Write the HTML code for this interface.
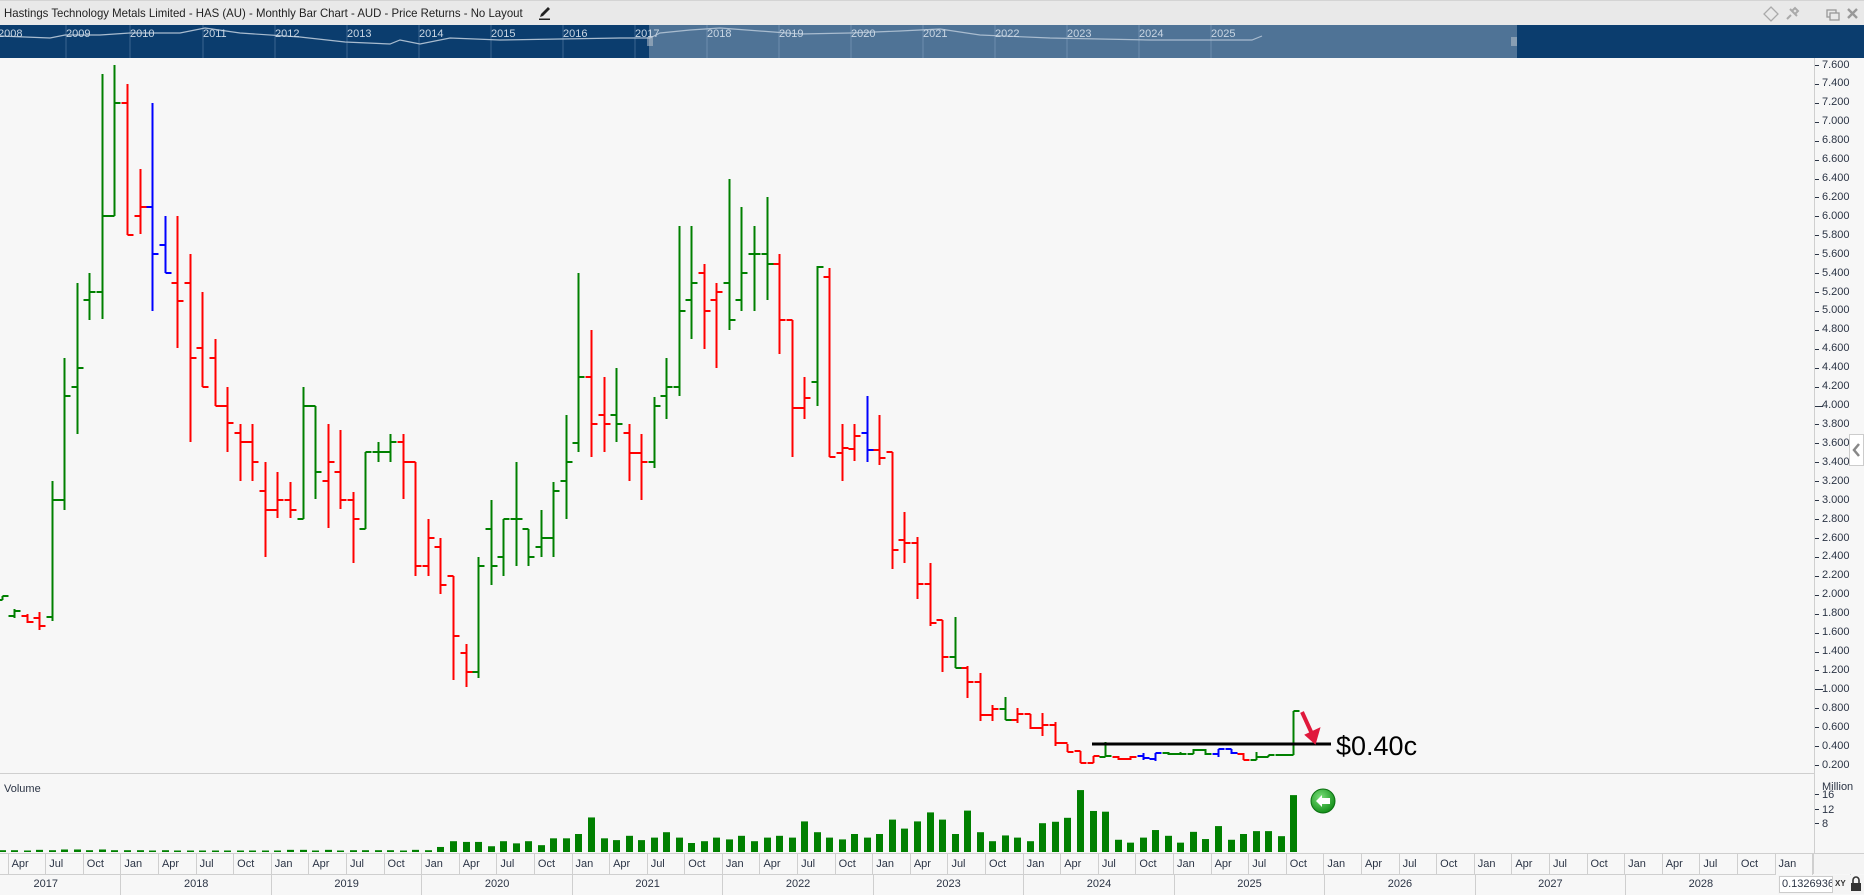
<!DOCTYPE html>
<html><head><meta charset="utf-8">
<style>
*{margin:0;padding:0;box-sizing:border-box}
body{width:1864px;height:894px;overflow:hidden;background:#f7f7f7;font-family:"Liberation Sans",sans-serif;position:relative;color:#2b3445}
#title{position:absolute;left:0;top:0;width:1864px;height:25px;background:#e9e9e9;border-top:1px solid #d4d4d4}
#title .t{position:absolute;left:4px;top:5px;font-size:12px;color:#222;white-space:nowrap;transform:scaleX(0.95);transform-origin:0 0}
#nav{position:absolute;left:0;top:25px;width:1864px;height:33px;background:#0b3d6e}
#plab{position:absolute;left:1822px;top:55.5px;line-height:18.92px;font-size:11px;color:#2b3445}
#months{position:absolute;left:-30px;top:853px;height:21px;white-space:nowrap;font-size:0;border-top:1px solid #cfcfcf}
#months span{display:inline-block;width:12.54px;height:21px;font-size:11px;line-height:20px;vertical-align:top;overflow:visible;white-space:nowrap}
#years{position:absolute;left:-30px;top:874px;height:20px;white-space:nowrap;font-size:0;border-top:1px solid #cfcfcf}
#years span{display:inline-block;width:150.48px;height:20px;font-size:11px;line-height:19px;text-align:center;border-left:1px solid #cfcfcf;vertical-align:top}
</style></head><body>
<div id="title"><div class="t">Hastings Technology Metals Limited - HAS (AU) - Monthly Bar Chart - AUD - Price Returns - No Layout</div>
<svg style="position:absolute;left:537px;top:4px" width="16" height="16" viewBox="0 0 16 16"><path d="M3 12 L4 9 L11 2 L13 4 L6 11 Z" fill="#222"/><rect x="2" y="13.5" width="11" height="1.5" fill="#222"/></svg>
<svg style="position:absolute;left:1760px;top:3px" width="104" height="20" viewBox="0 0 104 20">
<path d="M11 3 L18 10 L11 17 L4 10 Z" fill="none" stroke="#aaa" stroke-width="1.3"/>
<path d="M27 15 L31 11 M30 5 L37 12 M32 7 L35 4 L38 7 L35 10" stroke="#aaa" stroke-width="2" fill="none"/>
<rect x="67" y="6" width="9" height="7" fill="none" stroke="#999" stroke-width="1.3"/><rect x="70" y="9" width="9" height="7" fill="#e9e9e9" stroke="#999" stroke-width="1.3"/>
<path d="M88 5 L97 14 M97 5 L88 14" stroke="#999" stroke-width="2.4"/>
</svg></div>
<div id="nav">
<svg width="1864" height="33" style="position:absolute;left:0;top:0">
<rect x="649" y="0" width="868" height="33" fill="#4f7396"/>
<g stroke="#3b6590" stroke-width="1">
<line x1="66" y1="0" x2="66" y2="33"/><line x1="130" y1="0" x2="130" y2="33"/><line x1="203" y1="0" x2="203" y2="33"/><line x1="275" y1="0" x2="275" y2="33"/><line x1="347" y1="0" x2="347" y2="33"/><line x1="419" y1="0" x2="419" y2="33"/><line x1="491" y1="0" x2="491" y2="33"/><line x1="563" y1="0" x2="563" y2="33"/><line x1="635" y1="0" x2="635" y2="33"/></g>
<g stroke="#6d8eae" stroke-width="1"><line x1="707" y1="0" x2="707" y2="33"/><line x1="779" y1="0" x2="779" y2="33"/><line x1="851" y1="0" x2="851" y2="33"/><line x1="923" y1="0" x2="923" y2="33"/><line x1="995" y1="0" x2="995" y2="33"/><line x1="1067" y1="0" x2="1067" y2="33"/><line x1="1139" y1="0" x2="1139" y2="33"/><line x1="1211" y1="0" x2="1211" y2="33"/></g>
<polyline fill="none" stroke="#a9bccf" stroke-width="1.2" points="0,11 50,13 65,10 100,10 130,8 180,8 205,3 240,8 300,12 345,17 390,19 400,15 420,19 450,13 500,15 560,14 620,13 650,13 660,8 690,5 720,3 800,9 850,8 900,6 940,4 980,10 1050,13 1100,14 1150,15 1200,15 1252,15 1262,11"/>
<g stroke="#c0c8d0" stroke-width="1"><line x1="648" y1="12" x2="648" y2="21"/><line x1="650" y1="12" x2="650" y2="21"/><line x1="652" y1="12" x2="652" y2="21"/><line x1="1512" y1="12" x2="1512" y2="21"/><line x1="1514" y1="12" x2="1514" y2="21"/><line x1="1516" y1="12" x2="1516" y2="21"/></g>
<g font-family="Liberation Sans" font-size="11" fill="#c9d6e3">
<text x="-2" y="12">2008</text><text x="66" y="12">2009</text><text x="130" y="12">2010</text><text x="203" y="12">2011</text><text x="275" y="12">2012</text><text x="347" y="12">2013</text><text x="419" y="12">2014</text><text x="491" y="12">2015</text><text x="563" y="12">2016</text><text x="635" y="12">2017</text><text x="707" y="12">2018</text><text x="779" y="12">2019</text><text x="851" y="12">2020</text><text x="923" y="12">2021</text><text x="995" y="12">2022</text><text x="1067" y="12">2023</text><text x="1139" y="12">2024</text><text x="1211" y="12">2025</text></g>
</svg></div>

<svg id="ch" width="1864" height="894" style="position:absolute;left:0;top:0">
<line x1="1814.5" y1="58" x2="1814.5" y2="853" stroke="#cfcfcf"/>
<line x1="0" y1="773.5" x2="1814" y2="773.5" stroke="#cfcfcf"/>
<g id="bars"></g><g id="vols"></g><g id="ticks" stroke="#2b3445" stroke-width="1"></g>
<line x1="1092" y1="744" x2="1331" y2="744" stroke="#000" stroke-width="3"/>
<path d="M1302 712 L1313 736" stroke="#e0193c" stroke-width="4"/>
<path d="M1306 735 L1319 729 L1315 743 Z" fill="#e0193c" stroke="#e0193c" stroke-width="2"/>
<text x="1336" y="755" font-family="Liberation Sans" font-size="27" fill="#000">$0.40c</text>
<defs><radialGradient id="gb" cx="0.4" cy="0.35" r="0.7"><stop offset="0" stop-color="#7be07b"/><stop offset="1" stop-color="#0e8a14"/></radialGradient></defs>
<circle cx="1323" cy="801" r="12" fill="url(#gb)" stroke="#0a7010"/>
<path d="M1316 801 L1322 795 L1322 798 L1330 798 L1330 804 L1322 804 L1322 807 Z" fill="#fff"/>
<text x="4" y="792" font-family="Liberation Sans" font-size="11" fill="#2b3445">Volume</text>
<text x="1822" y="790" font-family="Liberation Sans" font-size="11" fill="#2b3445">Million</text>
<text x="1822" y="798" font-family="Liberation Sans" font-size="11" fill="#2b3445">16</text>
<text x="1822" y="813" font-family="Liberation Sans" font-size="11" fill="#2b3445">12</text>
<text x="1822" y="827" font-family="Liberation Sans" font-size="11" fill="#2b3445">8</text>
<rect x="1849.5" y="434.5" width="14" height="31" fill="#fff" stroke="#ccc"/>
<path d="M1859 444 L1854 450 L1859 456" fill="none" stroke="#888" stroke-width="2.5"/>
</svg>

<div id="plab">7.600<br>7.400<br>7.200<br>7.000<br>6.800<br>6.600<br>6.400<br>6.200<br>6.000<br>5.800<br>5.600<br>5.400<br>5.200<br>5.000<br>4.800<br>4.600<br>4.400<br>4.200<br>4.000<br>3.800<br>3.600<br>3.400<br>3.200<br>3.000<br>2.800<br>2.600<br>2.400<br>2.200<br>2.000<br>1.800<br>1.600<br>1.400<br>1.200<br>1.000<br>0.800<br>0.600<br>0.400<br>0.200</div>

<div id="months"><span></span><span></span><span></span><span style="border-left:1px solid #cfcfcf;padding-left:3px">Apr</span><span></span><span></span><span style="border-left:1px solid #cfcfcf;padding-left:3px">Jul</span><span></span><span></span><span style="border-left:1px solid #cfcfcf;padding-left:3px">Oct</span><span></span><span></span><span style="border-left:1px solid #cfcfcf;padding-left:3px">Jan</span><span></span><span></span><span style="border-left:1px solid #cfcfcf;padding-left:3px">Apr</span><span></span><span></span><span style="border-left:1px solid #cfcfcf;padding-left:3px">Jul</span><span></span><span></span><span style="border-left:1px solid #cfcfcf;padding-left:3px">Oct</span><span></span><span></span><span style="border-left:1px solid #cfcfcf;padding-left:3px">Jan</span><span></span><span></span><span style="border-left:1px solid #cfcfcf;padding-left:3px">Apr</span><span></span><span></span><span style="border-left:1px solid #cfcfcf;padding-left:3px">Jul</span><span></span><span></span><span style="border-left:1px solid #cfcfcf;padding-left:3px">Oct</span><span></span><span></span><span style="border-left:1px solid #cfcfcf;padding-left:3px">Jan</span><span></span><span></span><span style="border-left:1px solid #cfcfcf;padding-left:3px">Apr</span><span></span><span></span><span style="border-left:1px solid #cfcfcf;padding-left:3px">Jul</span><span></span><span></span><span style="border-left:1px solid #cfcfcf;padding-left:3px">Oct</span><span></span><span></span><span style="border-left:1px solid #cfcfcf;padding-left:3px">Jan</span><span></span><span></span><span style="border-left:1px solid #cfcfcf;padding-left:3px">Apr</span><span></span><span></span><span style="border-left:1px solid #cfcfcf;padding-left:3px">Jul</span><span></span><span></span><span style="border-left:1px solid #cfcfcf;padding-left:3px">Oct</span><span></span><span></span><span style="border-left:1px solid #cfcfcf;padding-left:3px">Jan</span><span></span><span></span><span style="border-left:1px solid #cfcfcf;padding-left:3px">Apr</span><span></span><span></span><span style="border-left:1px solid #cfcfcf;padding-left:3px">Jul</span><span></span><span></span><span style="border-left:1px solid #cfcfcf;padding-left:3px">Oct</span><span></span><span></span><span style="border-left:1px solid #cfcfcf;padding-left:3px">Jan</span><span></span><span></span><span style="border-left:1px solid #cfcfcf;padding-left:3px">Apr</span><span></span><span></span><span style="border-left:1px solid #cfcfcf;padding-left:3px">Jul</span><span></span><span></span><span style="border-left:1px solid #cfcfcf;padding-left:3px">Oct</span><span></span><span></span><span style="border-left:1px solid #cfcfcf;padding-left:3px">Jan</span><span></span><span></span><span style="border-left:1px solid #cfcfcf;padding-left:3px">Apr</span><span></span><span></span><span style="border-left:1px solid #cfcfcf;padding-left:3px">Jul</span><span></span><span></span><span style="border-left:1px solid #cfcfcf;padding-left:3px">Oct</span><span></span><span></span><span style="border-left:1px solid #cfcfcf;padding-left:3px">Jan</span><span></span><span></span><span style="border-left:1px solid #cfcfcf;padding-left:3px">Apr</span><span></span><span></span><span style="border-left:1px solid #cfcfcf;padding-left:3px">Jul</span><span></span><span></span><span style="border-left:1px solid #cfcfcf;padding-left:3px">Oct</span><span></span><span></span><span style="border-left:1px solid #cfcfcf;padding-left:3px">Jan</span><span></span><span></span><span style="border-left:1px solid #cfcfcf;padding-left:3px">Apr</span><span></span><span></span><span style="border-left:1px solid #cfcfcf;padding-left:3px">Jul</span><span></span><span></span><span style="border-left:1px solid #cfcfcf;padding-left:3px">Oct</span><span></span><span></span><span style="border-left:1px solid #cfcfcf;padding-left:3px">Jan</span><span></span><span></span><span style="border-left:1px solid #cfcfcf;padding-left:3px">Apr</span><span></span><span></span><span style="border-left:1px solid #cfcfcf;padding-left:3px">Jul</span><span></span><span></span><span style="border-left:1px solid #cfcfcf;padding-left:3px">Oct</span><span></span><span></span><span style="border-left:1px solid #cfcfcf;padding-left:3px">Jan</span><span></span><span></span><span style="border-left:1px solid #cfcfcf;padding-left:3px">Apr</span><span></span><span></span><span style="border-left:1px solid #cfcfcf;padding-left:3px">Jul</span><span></span><span></span><span style="border-left:1px solid #cfcfcf;padding-left:3px">Oct</span><span></span><span></span><span style="border-left:1px solid #cfcfcf;padding-left:3px">Jan</span><span></span><span></span><span style="border-left:1px solid #cfcfcf;padding-left:3px">Apr</span><span></span><span></span><span style="border-left:1px solid #cfcfcf;padding-left:3px">Jul</span><span></span><span></span><span style="border-left:1px solid #cfcfcf;padding-left:3px">Oct</span><span></span><span></span><span style="border-left:1px solid #cfcfcf;padding-left:3px">Jan</span><span></span><span></span><span style="border-left:1px solid #cfcfcf"></span></div>
<div id="years"><span>2017</span><span>2018</span><span>2019</span><span>2020</span><span>2021</span><span>2022</span><span>2023</span><span>2024</span><span>2025</span><span>2026</span><span>2027</span><span>2028</span></div>
<div style="position:absolute;left:1813px;top:853px;width:51px;height:21px;background:#f4f4f4;border-top:1px solid #cfcfcf;border-left:1px solid #cfcfcf"></div>
<div style="position:absolute;left:1778px;top:875px;width:86px;height:19px;background:#f4f4f4"></div>
<div style="position:absolute;left:1779px;top:876px;width:54px;height:17px;background:#fff;border:1px solid #ccc;font-size:11px;line-height:15px;padding-left:2px;overflow:hidden;white-space:nowrap;color:#2b3445">0.1326936</div>
<div style="position:absolute;left:1835px;top:879px;font-size:8px;font-weight:bold;color:#333">XY</div>
<svg style="position:absolute;left:1850px;top:876px" width="12" height="16"><path d="M3 7 V4 A3 3 0 0 1 9 4 V7" fill="none" stroke="#333" stroke-width="1.6"/><rect x="1" y="7" width="10" height="8" fill="#333"/></svg>

<script>
var D=[[596,600,600,596,'g'],[609,618,616,611,'g'],[614,623,616,622,'r'],[612,630,618,626,'r'],[481,621,617,500,'g'],[358,510,500,396,'g'],[283,434,387,368,'g'],[273,320,300,292,'g'],[74,319,292,216,'g'],[65,216,216,103,'g'],[84,235,103,235,'r'],[169,234,216,207,'r'],[103,311,207,254,'b'],[216,273,245,273,'b'],[216,348,283,301,'r'],[254,442,283,358,'r'],[292,387,348,387,'r'],[339,406,358,406,'r'],[387,452,406,423,'r'],[424,481,433,442,'r'],[424,481,442,462,'r'],[462,557,491,510,'r'],[472,518,510,500,'r'],[482,518,500,510,'r'],[387,519,519,406,'g'],[406,499,406,472,'g'],[424,528,481,462,'r'],[430,509,472,500,'r'],[492,563,500,519,'r'],[452,529,529,452,'g'],[442,462,452,452,'g'],[434,462,452,442,'g'],[434,499,442,462,'r'],[462,576,462,566,'r'],[519,576,566,538,'r'],[538,594,547,585,'r'],[576,680,576,636,'r'],[644,687,653,672,'r'],[557,678,672,566,'g'],[500,585,529,566,'g'],[519,576,557,519,'g'],[462,566,519,519,'g'],[529,566,529,557,'g'],[510,557,547,538,'g'],[482,557,538,491,'g'],[415,519,481,462,'g'],[273,452,443,377,'g'],[330,457,377,424,'r'],[377,452,415,424,'r'],[368,442,415,424,'g'],[424,481,433,453,'r'],[434,500,453,462,'r'],[397,468,462,406,'g'],[358,419,396,387,'g'],[226,396,387,311,'g'],[226,339,300,283,'g'],[264,349,273,311,'r'],[283,368,300,292,'r'],[179,330,283,320,'g'],[207,311,300,273,'g'],[226,311,254,254,'g'],[197,300,254,264,'g'],[254,354,264,320,'r'],[320,457,320,408,'r'],[377,419,408,398,'r'],[266,406,382,267,'g'],[268,457,277,457,'r'],[424,481,453,448,'r'],[424,461,449,436,'r'],[396,462,433,450,'b'],[415,465,450,458,'r'],[452,569,452,550,'r'],[512,563,540,543,'r'],[537,599,543,584,'r'],[563,626,584,623,'r'],[620,672,620,657,'r'],[617,668,657,668,'g'],[666,698,668,682,'r'],[673,721,682,715,'r'],[705,721,715,709,'r'],[697,720,709,720,'g'],[708,723,720,714,'r'],[714,729,714,728,'r'],[713,736,728,725,'r'],[722,746,725,743,'r'],[744,752,743,752,'r'],[751,763,751,763,'r'],[756,763,763,756,'r'],[742,757,757,756,'g'],[756,760,757,759,'r'],[756,760,759,757,'r'],[753,760,756,758,'b'],[753,761,759,753,'b'],[752,755,753,754,'g'],[752,755,754,754,'g'],[749,754,754,750,'g'],[749,755,750,754,'g'],[749,757,754,749,'b'],[749,754,749,753,'b'],[753,760,754,760,'r'],[752,760,760,757,'g'],[755,757,757,755,'g'],[754,756,755,755,'g'],[711,755,755,711,'g']];
var V=[0.5,0.5,0.4,0.6,0.5,0.7,0.7,0.5,0.7,0.5,
0.5,0.5,0.4,0.5,0.3,0.3,0.4,0.4,0.4,0.3,0.3,0.4,
0.4,0.6,0.6,0.4,0.6,0.4,0.5,0.5,0.5,0.5,0.4,0.6,
0.5,1.4,3,2.8,2.8,1.6,3,2.4,3,1.9,3.8,3.8,
5,9.6,3.8,3.3,4.5,3.3,4,5.5,4,2.5,3,4,
3.5,4.5,3,4,4.5,4,8.5,5.5,4,3.5,5,4,
5,9,6.5,8.5,11,9,5,11.5,5.5,3,4.6,4,
3,8,8.4,9.5,17.2,11.4,11.2,3.4,2.6,4,6.1,4.5,
2.6,5.6,3.6,7.2,3.4,5,5.8,5.8,4.4,15.8];
var C={g:'#008000',r:'#ff0000',b:'#0000ff'};
var s='',v='';
for(var i=0;i<D.length;i++){var m=i+2,x=Math.round(-23.5+12.54*m)+0.5,d=D[i],c=C[d[4]];
var h=Math.min(d[0],d[1]),l=Math.max(d[0],d[1]);if(l-h<2)l=h+2;
s+='<line x1="'+x+'" y1="'+h+'" x2="'+x+'" y2="'+l+'" stroke="'+c+'" stroke-width="2"/>';
s+='<line x1="'+(x-6)+'" y1="'+d[2]+'" x2="'+x+'" y2="'+d[2]+'" stroke="'+c+'" stroke-width="2"/>';
s+='<line x1="'+x+'" y1="'+d[3]+'" x2="'+(x+6)+'" y2="'+d[3]+'" stroke="'+c+'" stroke-width="2"/>';
var vh=Math.max(1.5,V[i]*3.6);v+='<rect x="'+(x-3.5)+'" y="'+(852-vh)+'" width="7" height="'+vh+'" fill="#008000"/>';}
document.getElementById('bars').innerHTML=s;document.getElementById('vols').innerHTML=v;
var t='';for(var k=0;k<38;k++){var y=Math.round(65+k*18.92)+0.5;var len=(k==18||k==33)?8:4;t+='<line x1="1815" y1="'+y+'" x2="'+(1815+len)+'" y2="'+y+'"/>';}
[794,809,823].forEach(function(y){t+='<line x1="1815" y1="'+(y+0.5)+'" x2="1819" y2="'+(y+0.5)+'"/>';});
document.getElementById('ticks').innerHTML=t;
</script>
</body></html>
